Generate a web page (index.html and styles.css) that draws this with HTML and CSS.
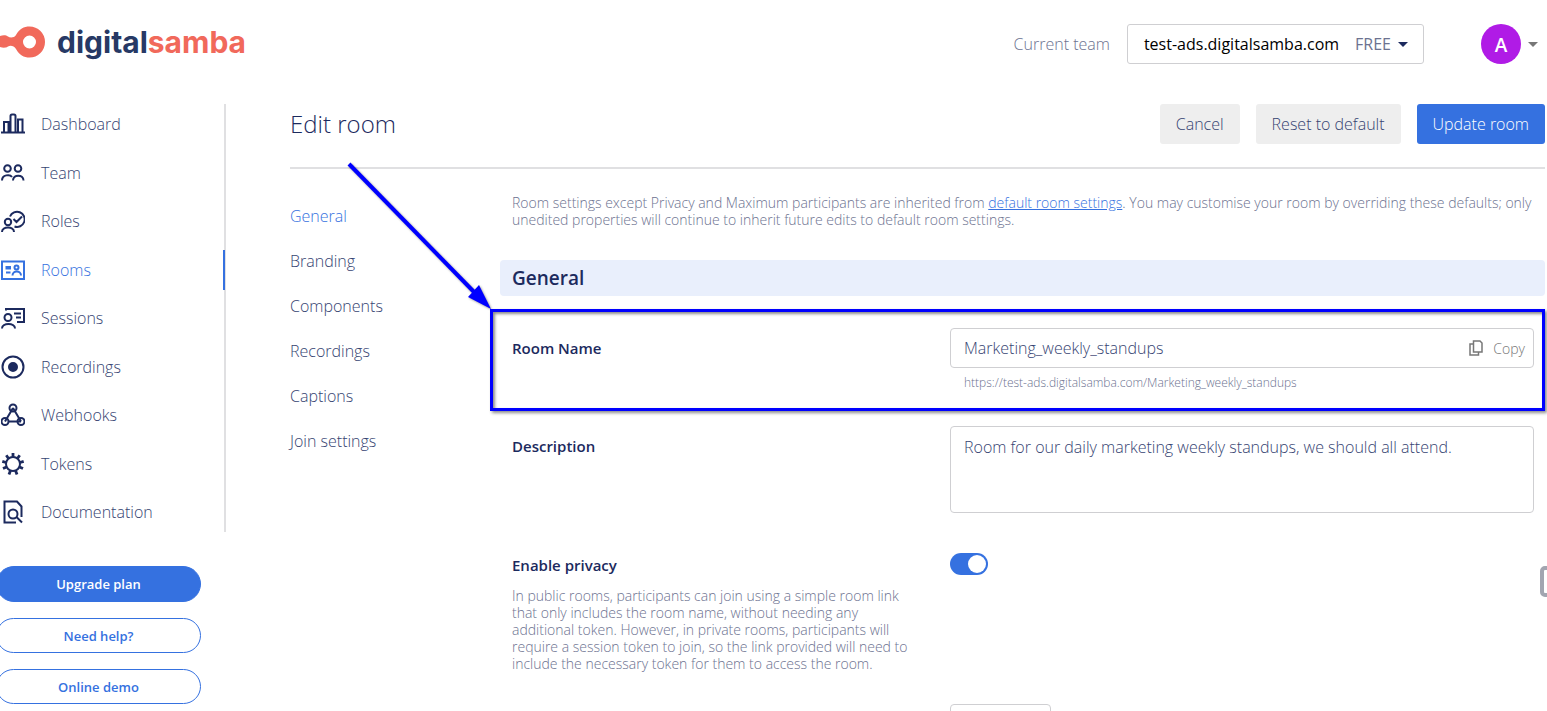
FILE: index.html
```
<!DOCTYPE html>
<html lang="en">
<head>
  <meta charset="UTF-8">
  <meta name="viewport" content="width=device-width, initial-scale=1.0">
  <title>Edit room - Digital Samba</title>
  <link rel="stylesheet" href="styles.css">
</head>
<body>
  <div class="page">
    <header class="topbar">
      <a href="#" class="logo">
        <svg class="logo-mark" viewBox="0 0 46 32" aria-hidden="true">
          <path fill="#f1695b" fill-rule="evenodd" d="M0 10C3 9 6 9 8 10.500C10 12 14 12 16 9C19 3 24 0.500 29.500 0.500A15.500 15.500 0 1 1 29.500 31.500C24 31.500 19 29 16 23C14 19.500 10 19 8 20.500C6 22 3 22 0 21ZM29.500 9.500a6.500 6.500 0 1 0 0 13a6.500 6.500 0 1 0 0-13Z"/>
        </svg>
        <span class="logo-text">digital<span class="logo-accent">samba</span></span>
      </a>
      <div class="topbar-tools">
        <span class="team-label" id="team-label">Current team</span>
        <button type="button" class="team-select" aria-haspopup="listbox" aria-describedby="team-label">
          <span>test-ads.digitalsamba.com</span>
          <span class="team-plan">FREE</span>
          <span class="caret"></span>
        </button>
        <button type="button" class="account" aria-label="Account menu">
          <span class="avatar">A</span>
          <span class="caret caret-grey"></span>
        </button>
      </div>
    </header>

    <div class="layout">
      <aside class="sidebar">
        <nav class="main-nav" aria-label="Main">
          <a href="#" class="nav-item">
            <svg class="icon" viewBox="0 0 24 24"><path d="M0 20.500h24M3 20.500v-10.500h4.500v10.500M9.500 20.500V4a1.500 1.500 0 0 1 1.500-1.500h2a1.500 1.500 0 0 1 1.500 1.500v16.500M17 20.500v-13h4.500v13"/></svg>
            Dashboard
          </a>
          <a href="#" class="nav-item">
            <svg class="icon" viewBox="0 0 24 24"><circle cx="6.500" cy="7.500" r="3.300"/><circle cx="17" cy="7.500" r="3.300"/><path d="M1 19.500c0-6 8-6.500 10-3.500M12 19.500c0-6.500 10.500-6.500 10.500 0"/></svg>
            Team
          </a>
          <a href="#" class="nav-item">
            <svg class="icon" viewBox="0 0 24 24"><circle cx="7" cy="13" r="3.200"/><path d="M1 23c0-6 12-6 12 0M9 7.500a7.600 7.600 0 1 1 4.500 10M12.500 10l3 3 5.500-5.500"/></svg>
            Roles
          </a>
          <a href="#" class="nav-item active">
            <svg class="icon" viewBox="0 0 24 24"><path d="M1 3.500h22v17.500H1zM5 14.500h4.500"/><path d="M5.500 9h3.500v1.500H5.500z"/><circle cx="15.500" cy="9.500" r="2"/><path d="M11.500 17.500c0-5.500 8.500-5.500 8.500 0"/></svg>
            Rooms
          </a>
          <a href="#" class="nav-item">
            <svg class="icon" viewBox="0 0 24 24"><circle cx="7" cy="11.500" r="3.500"/><path d="M1 22.500c0-6 13-6 13 0M5 4.500V3h18v13H16M13 7.500h7M15 11.500h5"/></svg>
            Sessions
          </a>
          <a href="#" class="nav-item">
            <svg class="icon" viewBox="0 0 24 24"><circle cx="12" cy="12" r="10.500"/><circle cx="12" cy="12" r="4" fill="currentColor"/></svg>
            Recordings
          </a>
          <a href="#" class="nav-item">
            <svg class="icon" viewBox="0 0 24 24"><circle cx="12" cy="5" r="3.500"/><circle cx="4" cy="18.500" r="3.500"/><circle cx="20" cy="18.500" r="3.500"/><path d="M12 5L4 18.500M12 5l8 13.500M8 18.500h12"/></svg>
            Webhooks
          </a>
          <a href="#" class="nav-item">
            <svg class="icon" viewBox="0 0 24 24"><circle cx="12" cy="12" r="7"/><path stroke-width="2.800" d="M12 5V1M16.500 6.500l2.200-3.200M19 10.500l3.700-1.200M18.500 15l3.500 1.600M14.500 18.500l1.500 4M9.500 18.500l-1.500 4M5.500 15l-3.500 1.600M5 10.500l-3.700-1.200M7.500 6.500L5.300 3.300"/></svg>
            Tokens
          </a>
          <a href="#" class="nav-item">
            <svg class="icon" viewBox="0 0 24 24"><path d="M15 22.500H3.500v-21H16l4.500 5V17"/><circle cx="12" cy="14" r="4.500"/><path d="M15.500 17l5.500 5.500"/></svg>
            Documentation
          </a>
        </nav>
        <div class="sidebar-actions">
          <button type="button" class="pill pill-primary">Upgrade plan</button>
          <button type="button" class="pill">Need help?</button>
          <button type="button" class="pill">Online demo</button>
        </div>
      </aside>

      <main class="main">
        <div class="main-header">
          <h1 class="title">Edit room</h1>
          <div class="actions">
            <button type="button" class="btn">Cancel</button>
            <button type="button" class="btn">Reset to default</button>
            <button type="submit" form="room-form" class="btn btn-primary">Update room</button>
          </div>
        </div>

        <div class="main-body">
          <nav class="sub-nav" aria-label="Room settings">
            <a href="#" class="active">General</a>
            <a href="#">Branding</a>
            <a href="#">Components</a>
            <a href="#">Recordings</a>
            <a href="#">Captions</a>
            <a href="#">Join settings</a>
          </nav>

          <form class="settings" id="room-form">
            <p class="intro">Room settings except Privacy and Maximum participants are inherited from <a href="#">default room settings</a>. You may customise your room by overriding these defaults; only unedited properties will continue to inherit future edits to default room settings.</p>
            <h2 class="section-title">General</h2>

            <div class="row highlighted">
              <label class="row-label" for="room-name">Room Name</label>
              <div>
                <div class="input-box">
                  <input type="text" id="room-name" value="Marketing_weekly_standups">
                  <button type="button" class="copy">
                    <svg viewBox="0 0 14 16" aria-hidden="true"><path d="M4.500 1h6.500l2 2v9H4.500zM4.500 4H1v11h8.500v-3"/></svg>
                    Copy
                  </button>
                </div>
                <div class="hint">https://test-ads.digitalsamba.com/Marketing_weekly_standups</div>
              </div>
              <svg class="arrow" viewBox="0 0 146 150" aria-hidden="true">
                <path d="M2 2L128 131" stroke="#00f" stroke-width="4"/>
                <path d="M144 147L121 135L132 123Z" fill="#00f"/>
              </svg>
            </div>

            <div class="row">
              <label class="row-label" for="description">Description</label>
              <textarea id="description">Room for our daily marketing weekly standups, we should all attend.</textarea>
            </div>

            <div class="row">
              <div>
                <label class="row-label" for="privacy">Enable privacy</label>
                <p class="help">In public rooms, participants can join using a simple room link that only includes the room name, without needing any additional token. However, in private rooms, participants will require a session token to join, so the link provided will need to include the necessary token for them to access the room.</p>
              </div>
              <div class="toggle-box">
                <input type="checkbox" id="privacy" class="toggle" role="switch" checked>
              </div>
            </div>

            <div class="row">
              <div></div>
              <input type="number" class="number" aria-label="Maximum participants">
            </div>
          </form>
        </div>
      </main>
    </div>

    <button type="button" class="side-widget" aria-label="Open widget"></button>
  </div>
</body>
</html>
```
FILE: styles.css
```
:root {
  --navy: #1c2a5e;
  --text: #364472;
  --muted: #6c7290;
  --blue: #3571e0;
  --line: #e0e0e2;
  --field-line: #cfcfd2;
  --font-family: "Open Sans", "Segoe UI", sans-serif;
}

* { box-sizing: border-box; }

body {
  margin: 0;
  font-family: var(--font-family);
  font-size: 16px;
  font-weight: 300;
  color: var(--text);
  background-color: #fff;
}

button, input, textarea { font: inherit; color: inherit; }
button { cursor: pointer; }
a { color: inherit; text-decoration: none; }

.page {
  position: relative;
  height: 100vh;
  overflow: hidden;
}

/* Top bar */
.topbar {
  display: flex;
  justify-content: space-between;
  align-items: flex-start;
  padding: 24px 9px 40px 0;
}

.logo { display: flex; align-items: center; gap: 11px; height: 36px; }
.logo-mark { width: 46px; height: 32px; }
.logo-text {
  font-family: Inter, sans-serif;
  font-size: 30px;
  font-weight: 700;
  line-height: 36px;
  color: #273965;
}
.logo-accent { color: #f1695b; }

.topbar-tools { display: flex; align-items: center; }
.team-label { color: var(--muted); margin-right: 17px; }
.team-select {
  display: flex;
  align-items: center;
  height: 40px;
  padding: 0 15px 0 16px;
  border: 1px solid var(--field-line);
  border-radius: 3px;
  background: #fff;
  color: #000;
  font-weight: 400;
}
.team-plan { color: var(--muted); margin: 0 7px 0 16px; }
.caret {
  border: 5px solid transparent;
  border-top-color: var(--navy);
  border-bottom: 0;
}
.caret-grey { border-top-color: #777; }

.account {
  display: flex;
  align-items: center;
  gap: 7px;
  margin-left: 57px;
  padding: 0;
  border: 0;
  background: none;
}
.avatar {
  width: 40px;
  height: 40px;
  border-radius: 50%;
  background-color: #b01be6;
  color: #fff;
  font-size: 19px;
  font-weight: 600;
  line-height: 42px;
  text-align: center;
}

.layout { display: flex; }

/* Sidebar */
.sidebar { flex: none; width: 226px; }
.main-nav {
  display: flex;
  flex-direction: column;
  justify-content: space-between;
  min-height: 428px;
  border-right: 2px solid var(--line);
}
.nav-item {
  display: flex;
  align-items: center;
  gap: 16px;
  height: 40px;
  padding-left: 1px;
}
.nav-item.active {
  margin-right: -1px;
  color: var(--blue);
  border-right: 2px solid var(--blue);
}
.icon {
  width: 24px;
  height: 24px;
  fill: none;
  stroke: currentColor;
  stroke-width: 2;
  color: var(--navy);
}
.active .icon { color: var(--blue); }

.sidebar-actions {
  display: flex;
  flex-direction: column;
  gap: 16px;
  margin: 34px 25px 0 -4px;
}
.pill {
  height: 35px;
  border: 1px solid var(--blue);
  border-radius: 18px;
  background: #fff;
  color: var(--blue);
  font-size: 13px;
  font-weight: 600;
}
.pill-primary { height: 36px; background: var(--blue); color: #fff; }

/* Main column */
.main { flex: 1; margin: 0 2px 0 64px; }
.main-header {
  display: flex;
  justify-content: space-between;
  align-items: center;
  padding-bottom: 23px;
  border-bottom: 2px solid var(--line);
}
.title {
  margin: 0;
  font-size: 24px;
  font-weight: 300;
  line-height: 40px;
  color: var(--navy);
}
.actions { display: flex; gap: 16px; }
.btn {
  height: 40px;
  padding: 0 16px;
  border: 0;
  border-radius: 3px;
  background: #eee;
}
.btn-primary { background: var(--blue); color: #fff; }

.main-body { display: flex; }
.sub-nav {
  flex: none;
  display: flex;
  flex-direction: column;
  gap: 21px;
  width: 210px;
  padding-top: 35px;
  line-height: 24px;
}
.sub-nav .active { color: var(--blue); }

.settings { flex: 1; }
.intro, .help {
  margin: 0;
  font-size: 14px;
  line-height: 17px;
  color: var(--muted);
}
.intro { padding: 25px 12px 32px; }
.intro a { color: var(--blue); text-decoration: underline; }
.section-title {
  margin: 0 0 16px;
  padding: 0 12px;
  border-radius: 4px;
  background-color: #e9effc;
  font-size: 19px;
  font-weight: 600;
  line-height: 36px;
  color: var(--navy);
}

.row {
  display: grid;
  grid-template-columns: 3fr 4fr;
  align-items: start;
  padding: 16px 11px 16px 12px;
}
.row-label {
  display: block;
  font-size: 15px;
  font-weight: 600;
  line-height: 40px;
  color: var(--navy);
}
.help { max-width: 400px; margin-top: 2px; }

.highlighted { position: relative; }
.highlighted::after {
  content: "";
  position: absolute;
  inset: -3px 0 -1px -10px;
  border: 3px solid #00f;
  box-shadow: 2px 2px 3px rgba(0, 0, 0, 0.45), inset 2px 2px 3px rgba(0, 0, 0, 0.45);
  pointer-events: none;
}
.arrow {
  position: absolute;
  top: -150px;
  left: -153px;
  width: 146px;
  height: 150px;
  fill: none;
  filter: drop-shadow(1px 1px 1px rgba(0, 0, 0, 0.4));
  pointer-events: none;
}

.input-box, textarea, .number {
  border: 1px solid var(--field-line);
  border-radius: 4px;
  background: #fff;
}
.input-box {
  display: flex;
  align-items: center;
  height: 40px;
  padding: 0 8px 0 13px;
}
.input-box input {
  flex: 1;
  min-width: 0;
  padding: 0;
  border: 0;
  outline: 0;
}
.copy {
  display: flex;
  align-items: center;
  gap: 10px;
  padding: 0;
  border: 0;
  background: none;
  color: #777;
  font-size: 14px;
}
.copy svg {
  width: 14px;
  height: 16px;
  fill: none;
  stroke: #777;
  stroke-width: 1.500;
}
.hint {
  margin-top: 4px;
  padding-left: 14px;
  font-size: 12px;
  line-height: 22px;
  color: var(--muted);
}
textarea {
  display: block;
  width: 100%;
  height: 87px;
  padding: 8px 13px;
  line-height: 24px;
  resize: none;
}

.toggle-box { display: flex; align-items: center; height: 38px; }
.toggle {
  appearance: none;
  display: flex;
  justify-content: flex-end;
  width: 38px;
  height: 22px;
  margin: 0;
  padding: 2px;
  border-radius: 11px;
  background-color: var(--blue);
}
.toggle::before {
  content: "";
  width: 18px;
  height: 18px;
  border-radius: 50%;
  background-color: #fff;
}
.number { width: 101px; height: 40px; }

/* Floating handle at the window edge */
.side-widget {
  position: absolute;
  top: 566px;
  right: -20px;
  width: 27px;
  height: 31px;
  padding: 0;
  border: 4px solid #a2a5b0;
  border-radius: 5px;
  background: #fff;
}
```
